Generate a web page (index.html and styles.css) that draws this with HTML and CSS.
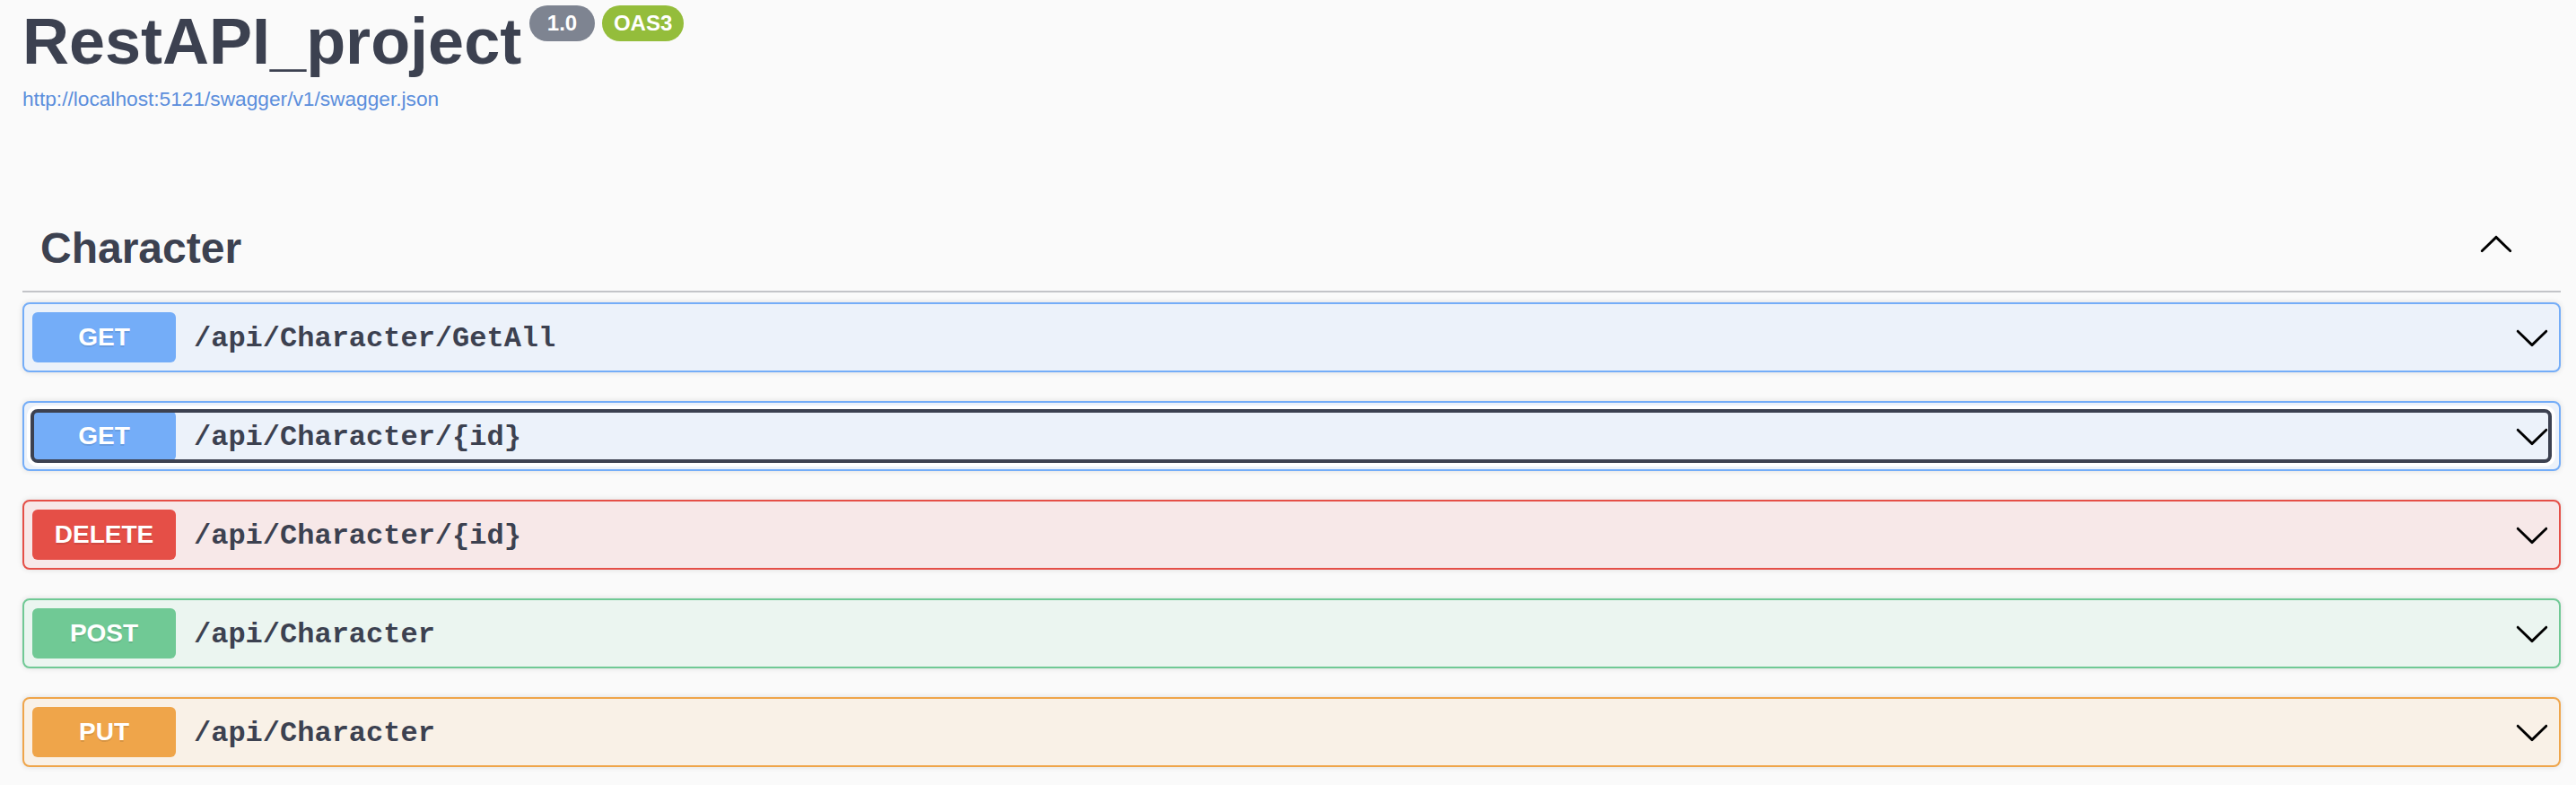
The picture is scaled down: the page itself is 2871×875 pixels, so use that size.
FILE: index.html
```html
<!DOCTYPE html>
<html lang="en">
<head>
<meta charset="utf-8">
<title>Swagger UI</title>
<link rel="stylesheet" href="styles.css">
</head>
<body>
<div class="swagger-ui">
  <div class="info">
    <h2 class="title">
      <span class="title-text">RestAPI_project</span>
      <small class="version"><pre> 1.0 </pre></small>
      <small class="version-stamp"><pre>OAS3</pre></small>
    </h2>
    <a class="spec-link" href="#">http://localhost:5121/swagger/v1/swagger.json</a>
  </div>

  <section class="tag-section">
    <h3 class="opblock-tag">
      <span class="tag-name">Character</span>
      <span class="expand">
        <svg class="arrow up" viewBox="0 0 20 20" width="40" height="40"><path d="M17.418 6.109c.272-.268.709-.268.979 0s.271.701 0 .969l-7.908 7.83c-.27.268-.707.268-.979 0l-7.908-7.83c-.27-.268-.27-.701 0-.969.271-.268.709-.268.979 0L10 13.25l7.418-7.141z"/></svg>
      </span>
    </h3>

    <div class="opblock get">
      <div class="summary">
        <span class="method">GET</span>
        <span class="path">/api/Character/GetAll</span>
        <svg class="arrow" viewBox="0 0 20 20" width="40" height="40"><path d="M17.418 6.109c.272-.268.709-.268.979 0s.271.701 0 .969l-7.908 7.83c-.27.268-.707.268-.979 0l-7.908-7.83c-.27-.268-.27-.701 0-.969.271-.268.709-.268.979 0L10 13.25l7.418-7.141z"/></svg>
      </div>
    </div>

    <div class="opblock get">
      <div class="summary focused">
        <span class="method">GET</span>
        <span class="path">/api/Character/{id}</span>
        <svg class="arrow" viewBox="0 0 20 20" width="40" height="40"><path d="M17.418 6.109c.272-.268.709-.268.979 0s.271.701 0 .969l-7.908 7.83c-.27.268-.707.268-.979 0l-7.908-7.83c-.27-.268-.27-.701 0-.969.271-.268.709-.268.979 0L10 13.25l7.418-7.141z"/></svg>
      </div>
    </div>

    <div class="opblock delete">
      <div class="summary">
        <span class="method">DELETE</span>
        <span class="path">/api/Character/{id}</span>
        <svg class="arrow" viewBox="0 0 20 20" width="40" height="40"><path d="M17.418 6.109c.272-.268.709-.268.979 0s.271.701 0 .969l-7.908 7.83c-.27.268-.707.268-.979 0l-7.908-7.83c-.27-.268-.27-.701 0-.969.271-.268.709-.268.979 0L10 13.25l7.418-7.141z"/></svg>
      </div>
    </div>

    <div class="opblock post">
      <div class="summary">
        <span class="method">POST</span>
        <span class="path">/api/Character</span>
        <svg class="arrow" viewBox="0 0 20 20" width="40" height="40"><path d="M17.418 6.109c.272-.268.709-.268.979 0s.271.701 0 .969l-7.908 7.83c-.27.268-.707.268-.979 0l-7.908-7.83c-.27-.268-.27-.701 0-.969.271-.268.709-.268.979 0L10 13.25l7.418-7.141z"/></svg>
      </div>
    </div>

    <div class="opblock put">
      <div class="summary">
        <span class="method">PUT</span>
        <span class="path">/api/Character</span>
        <svg class="arrow" viewBox="0 0 20 20" width="40" height="40"><path d="M17.418 6.109c.272-.268.709-.268.979 0s.271.701 0 .969l-7.908 7.83c-.27.268-.707.268-.979 0l-7.908-7.83c-.27-.268-.27-.701 0-.969.271-.268.709-.268.979 0L10 13.25l7.418-7.141z"/></svg>
      </div>
    </div>
  </section>
</div>
</body>
</html>
```

FILE: styles.css
```css
html, body {
  margin: 0;
  padding: 0;
  background: #fafafa;
}

body {
  font-family: "Liberation Sans", Arial, sans-serif;
  color: #3c4150;
}

.swagger-ui {
  padding: 0 17px 0 25px;
}

/* ---------- info ---------- */
.info {
  padding-top: 6px;
}

.title {
  display: flex;
  align-items: flex-start;
  margin: 0;
  font-weight: 700;
  color: #3c4150;
}

.title-text {
  display: block;
  margin-top: 4px;
  font-size: 72px;
  line-height: 72px;
}

.title small {
  display: block;
  margin-left: 9px;
  padding: 4px 13px;
  border-radius: 57px;
  background: #7e8491;
}

.title small.version-stamp {
  margin-left: 8px;
  background: #94bd3b;
}

.title small pre {
  margin: 0;
  font-family: "Liberation Sans", Arial, sans-serif;
  font-size: 24px;
  line-height: 32px;
  font-weight: 700;
  color: #fff;
  white-space: pre;
}

.spec-link {
  display: block;
  margin-top: 14px;
  font-size: 22.7px;
  line-height: 28px;
  color: #5b8edc;
  text-decoration: none;
}

/* ---------- tag section ---------- */
.tag-section {
  margin-top: 105px;
}

.opblock-tag {
  display: flex;
  align-items: center;
  justify-content: space-between;
  margin: 0 0 11px;
  padding: 20px 52px 20px 20px;
  border-bottom: 2px solid #c3c4c8;
  font-size: 48px;
  line-height: 55px;
  font-weight: 700;
  color: #3c4150;
}

.expand {
  display: flex;
  margin-bottom: 7px;
}

.arrow {
  display: block;
  fill: #000;
  flex: none;
}

.arrow.up {
  transform: rotate(180deg);
}

/* ---------- operation blocks ---------- */
.opblock {
  margin-bottom: 32px;
  padding: 9px 10px 9px 9px;
  border: 2px solid;
  border-radius: 8px;
  box-shadow: 0 0 6px rgba(0, 0, 0, 0.12);
}

.summary {
  display: flex;
  align-items: center;
  height: 56px;
  border-radius: 6px;
}

.summary.focused {
  outline: 4px solid #3c4150;
  outline-offset: -2px;
  box-shadow: 0 0 0 6px #fff;
}

.method {
  flex: none;
  width: 160px;
  height: 56px;
  line-height: 56px;
  border-radius: 6px;
  text-align: center;
  font-size: 28px;
  font-weight: 700;
  color: #fff;
  text-shadow: 0 2px 0 rgba(0, 0, 0, 0.1);
}

.path {
  flex: 1;
  padding: 3px 20px 0;
  font-family: "Liberation Mono", "Courier New", monospace;
  font-size: 32px;
  font-weight: 700;
  color: #3c4150;
}

.opblock.get { border-color: #74adf8; background: #ecf2fa; }
.opblock.get .method { background: #74adf8; }

.opblock.delete { border-color: #e54f47; background: #f7e8e8; }
.opblock.delete .method { background: #e54f47; }

.opblock.post { border-color: #70c995; background: #ebf5f0; }
.opblock.post .method { background: #70c995; }

.opblock.put { border-color: #efa54a; background: #f9f1e7; }
.opblock.put .method { background: #efa54a; }
```
